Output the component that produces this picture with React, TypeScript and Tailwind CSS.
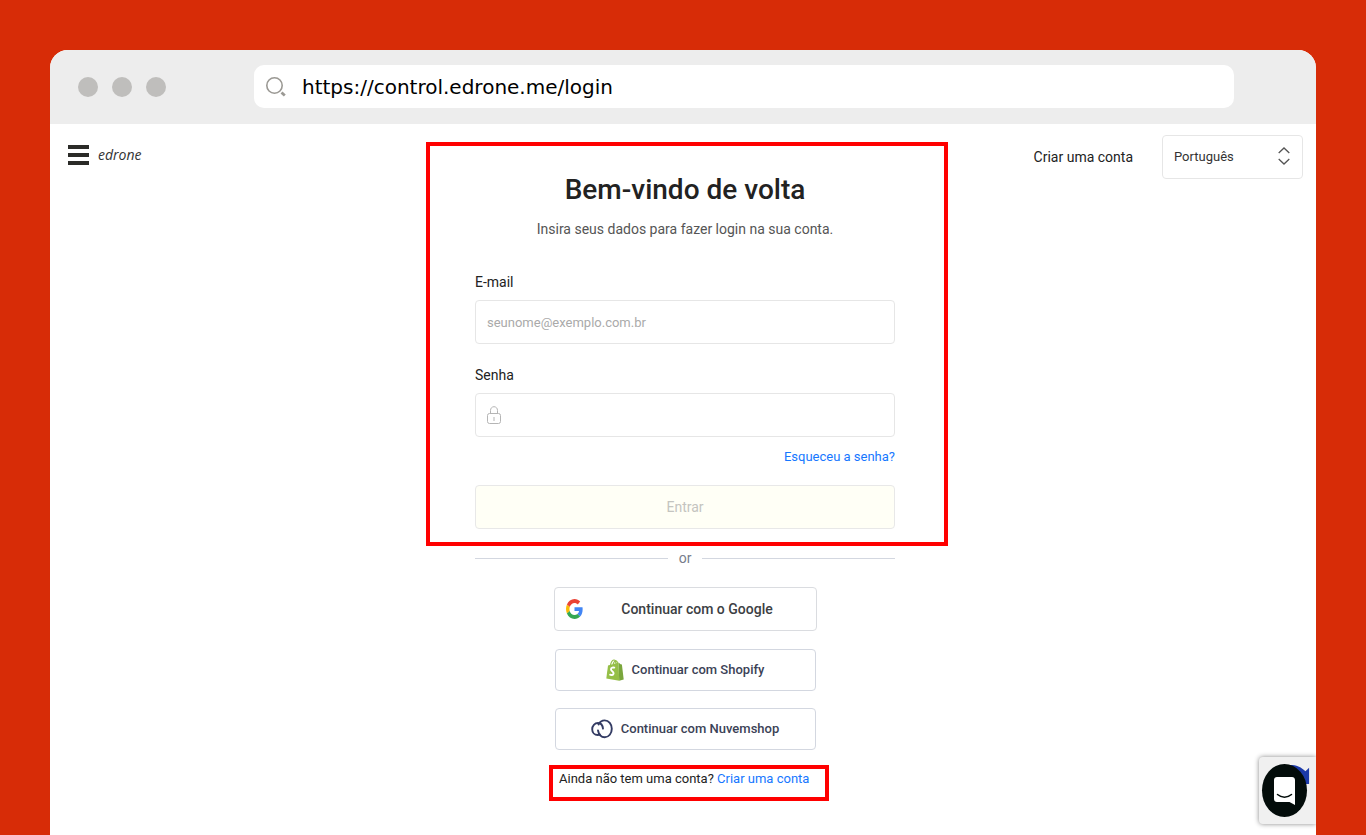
import React from "react";

const GoogleIcon = () => (
  <svg viewBox="0 0 48 48" preserveAspectRatio="none" className="w-[17px] h-5" aria-hidden="true">
    <path fill="#EA4335" d="M24 9.5c3.54 0 6.71 1.22 9.21 3.6l6.85-6.85C35.9 2.38 30.47 0 24 0 14.62 0 6.51 5.38 2.56 13.22l7.98 6.19C12.43 13.72 17.74 9.5 24 9.5z" />
    <path fill="#4285F4" d="M46.98 24.55c0-1.57-.15-3.09-.38-4.55H24v9.02h12.94c-.58 2.96-2.26 5.48-4.78 7.18l7.73 6c4.51-4.18 7.09-10.36 7.09-17.65z" />
    <path fill="#FBBC05" d="M10.53 28.59c-.48-1.45-.76-2.99-.76-4.59s.27-3.14.76-4.59l-7.98-6.19C.92 16.46 0 20.12 0 24c0 3.88.92 7.54 2.56 10.78l7.97-6.19z" />
    <path fill="#34A853" d="M24 48c6.48 0 11.93-2.13 15.89-5.81l-7.73-6c-2.15 1.45-4.92 2.3-8.16 2.3-6.26 0-11.57-4.22-13.47-9.91l-7.98 6.19C6.51 42.62 14.62 48 24 48z" />
  </svg>
);

const ShopifyIcon = () => (
  <svg viewBox="0 0 18 22" className="w-[18px] h-[22px]" aria-hidden="true">
    <path fill="#95BF47" d="M2 6.400 12.500 3.600 13.200 21.700 0.300 19.400z" />
    <path fill="#7aa63c" d="M12.500 3.600 14.600 5.300l1.300.2L17.700 20.400l-4.500 1.300z" />
    <path fill="none" stroke="#95BF47" strokeWidth="1.200" d="M4.500 6.200C5 3.400 6.300 1.300 7.800 1c1.300-.2 2 1.400 2 3.600M7.200 5.200C7.700 3 9 1.600 10.100 1.900c.9.3 1.300 1.200 1.400 2.200" />
    <path fill="none" stroke="#fff" strokeWidth="1.900" d="M8.900 8.900C7.500 8 4.800 8.500 5 10.500c.1 1.800 2.700 1.800 2.600 3.900-.1 1.900-2.500 2-4.100.8" />
  </svg>
);

const NuvemshopIcon = () => (
  <svg viewBox="0 0 22 20" className="w-[22px] h-5" fill="none" stroke="#333b63" strokeWidth="1.900" strokeLinecap="round" aria-hidden="true">
    <path d="M7.500 5.500C8.700 3 11 1.400 13.700 1.400c4.100 0 7.100 3.800 7.100 8.400s-3 8.500-7.100 8.500c-3.600 0-5.900-2.700-6.700-6.800" />
    <path d="M12 9.600C11.600 6.300 9.600 4 7 4 3.700 4 1.200 6.700 1.200 10.200S3.700 16 6.700 16c.9 0 1.500-.2 2.200-.6" />
  </svg>
);

const LockIcon = () => (
  <svg viewBox="0 0 14 18" className="w-[14px] h-[18px]" fill="none" stroke="#b5b5b5" aria-hidden="true">
    <rect x="0.5" y="7.500" width="13" height="10" rx="2" />
    <path d="M3.500 7.500V4.500C3.500 2.200 5 .7 7 .7s3.500 1.500 3.500 3.800v3M7 11v4" />
  </svg>
);

function BrowserBar() {
  return (
    <div className="flex items-center h-[74px] bg-[#ededed] pl-7 pr-[82px] pb-px">
      <div className="flex gap-[14px] w-44 shrink-0">
        <span className="w-5 h-5 rounded-full bg-[#bfbebc]" />
        <span className="w-5 h-5 rounded-full bg-[#bfbebc]" />
        <span className="w-5 h-5 rounded-full bg-[#bfbebc]" />
      </div>
      <div className="flex flex-1 items-center h-[43px] rounded-[10px] bg-white pl-3">
        <svg viewBox="0 0 21 20" className="w-[21px] h-5" fill="none" stroke="#9b9994" aria-hidden="true">
          <circle cx="8.500" cy="8.500" r="7.700" strokeWidth="1.600" />
          <path d="M15.500 15.500l3.300 3" strokeWidth="2.800" />
        </svg>
        <input
          aria-label="URL"
          readOnly
          value="https://control.edrone.me/login"
          className="flex-1 ml-[15px] font-['DejaVu_Sans',sans-serif] text-[20px] text-black outline-none"
        />
      </div>
    </div>
  );
}

function LoginForm() {
  return (
    <form className="w-[522px] border-4 border-[#ff0000] pt-6 pb-[13px] pl-[45px] pr-[49px]">
      <h1 className="text-[28px] leading-10 font-medium text-center text-[#222]">Bem-vindo de volta</h1>
      <p className="mt-[7px] text-[14px] leading-6 text-center text-[#555]">
        Insira seus dados para fazer login na sua conta.
      </p>
      <label htmlFor="email" className="block mt-[29px] text-[14px] leading-6 text-[#222]">
        E-mail
      </label>
      <input
        id="email"
        type="email"
        placeholder="seunome@exemplo.com.br"
        className="block w-full h-11 mt-[6px] px-[11px] rounded border border-[#e6e6e6] text-[13px] placeholder:text-[#aaa]"
      />
      <label htmlFor="password" className="block mt-[19px] text-[14px] leading-6 text-[#222]">
        Senha
      </label>
      <div className="flex items-center gap-2 h-11 mt-[6px] px-[11px] rounded border border-[#e6e6e6]">
        <LockIcon />
        <input id="password" type="password" className="flex-1 text-[13px] outline-none" />
      </div>
      <div className="mt-2 text-right text-[13px] leading-6">
        <a href="#" className="text-[#1677ff]">Esqueceu a senha?</a>
      </div>
      <button type="button" className="block w-full h-11 mt-4 rounded border border-[#e8e8e8] bg-[#fffff6] text-[14px] text-[#c4c4c0]">
        Entrar
      </button>
    </form>
  );
}

export default function App() {
  return (
    <div className="flex min-h-screen bg-[#d72c07] px-[50px] pt-[50px] font-[Roboto,sans-serif]">
      <div className="relative flex-1 bg-white rounded-t-[18px] overflow-hidden">
        <BrowserBar />
        <main className="grid grid-cols-[1fr_auto_1fr] items-start pl-2">
          <header className="flex items-center gap-[9px] mt-[19px] ml-[10px]">
            <button type="button" aria-label="Menu" className="flex flex-col gap-1 w-[21px]">
              <span className="w-full h-1 bg-[#2b2b28]" />
              <span className="w-full h-1 bg-[#2b2b28]" />
              <span className="w-full h-1 bg-[#2b2b28]" />
            </button>
            <span className="font-['Open_Sans',sans-serif] text-[14px] leading-6 italic text-[#333]">edrone</span>
          </header>

          <div className="flex flex-col items-center mt-[18px]">
            <LoginForm />
            <div className="flex items-center gap-[11px] w-[420px] mr-1 text-[14px] leading-6 text-[#777d8c]">
              <span className="flex-1 h-px bg-[#d3d7e0]" />
              or
              <span className="flex-1 h-px bg-[#d3d7e0]" />
            </div>
            <button type="button" className="flex items-center w-[263px] h-11 mt-[17px] mr-1 pl-[11px] pr-4 rounded border border-[#dadce0] text-[14px] font-medium text-[#3c4043]">
              <GoogleIcon />
              <span className="flex-1 ml-3">Continuar com o Google</span>
            </button>
            <button type="button" className="flex items-center justify-center gap-2 w-[261px] h-[42px] mt-[18px] mr-1 rounded border border-[#d3d7e0] text-[13px] font-medium text-[#3b4256]">
              <ShopifyIcon />
              Continuar com Shopify
            </button>
            <button type="button" className="flex items-center justify-center gap-2 w-[261px] h-[42px] mt-[17px] mr-1 rounded border border-[#d3d7e0] text-[13px] font-medium text-[#3b4256]">
              <NuvemshopIcon />
              Continuar com Nuvemshop
            </button>
            <p className="w-[280px] h-9 mt-[15px] ml-1 pl-[6px] border-4 border-[#ff0000] text-[13px] leading-5 text-[#222] whitespace-nowrap">
              Ainda não tem uma conta? <a href="#" className="text-[#1677ff]">Criar uma conta</a>
            </p>
          </div>

          <nav className="flex items-center justify-end gap-[29px] mt-[11px] mr-[13px]">
            <a href="#" className="text-[14px] text-[#222]">Criar uma conta</a>
            <div className="relative">
              <select aria-label="Idioma" className="appearance-none w-[141px] h-11 px-[11px] rounded border border-[#e6e6e6] bg-white text-[13px] text-[#333]">
                <option>Português</option>
              </select>
              <svg viewBox="0 0 12 18" className="absolute right-[13px] top-3 w-3 h-[18px] pointer-events-none" fill="none" stroke="#555" strokeWidth="1.300" aria-hidden="true">
                <path d="M.7 5.900 6 1l5.300 4.900M.7 12.100 6 17l5.300-4.900" />
              </svg>
            </div>
          </nav>
        </main>

        <div className="absolute right-0 bottom-[11px] flex items-center w-[57px] h-[67px] pl-[3px] rounded-l-sm bg-[#f0f0f0] shadow-[0_0_5px_#888]">
          <svg viewBox="0 0 22 22" className="absolute left-[30px] top-2 w-[22px] h-5" aria-hidden="true">
            <path fill="#1c3aa9" d="M0 0C7 0 12 2 17 7l4-4v18H14L0 10z" />
          </svg>
          <button type="button" aria-label="Chat" className="relative flex items-center justify-center w-[45px] h-[53px] rounded-[50%] bg-[#030c0a]">
            <svg viewBox="0 0 21 28" className="w-[21px] h-7" aria-hidden="true">
              <path fill="#fff" d="M3 0h15c1.700 0 3 1.300 3 3v25l-5.500-3H3c-1.700 0-3-1.300-3-3V3c0-1.700 1.300-3 3-3z" />
              <path fill="none" stroke="#030c0a" strokeWidth="1.500" strokeLinecap="round" d="M3.500 17.500c4 3.500 10 3.500 14 0" />
            </svg>
          </button>
        </div>
      </div>
    </div>
  );
}
